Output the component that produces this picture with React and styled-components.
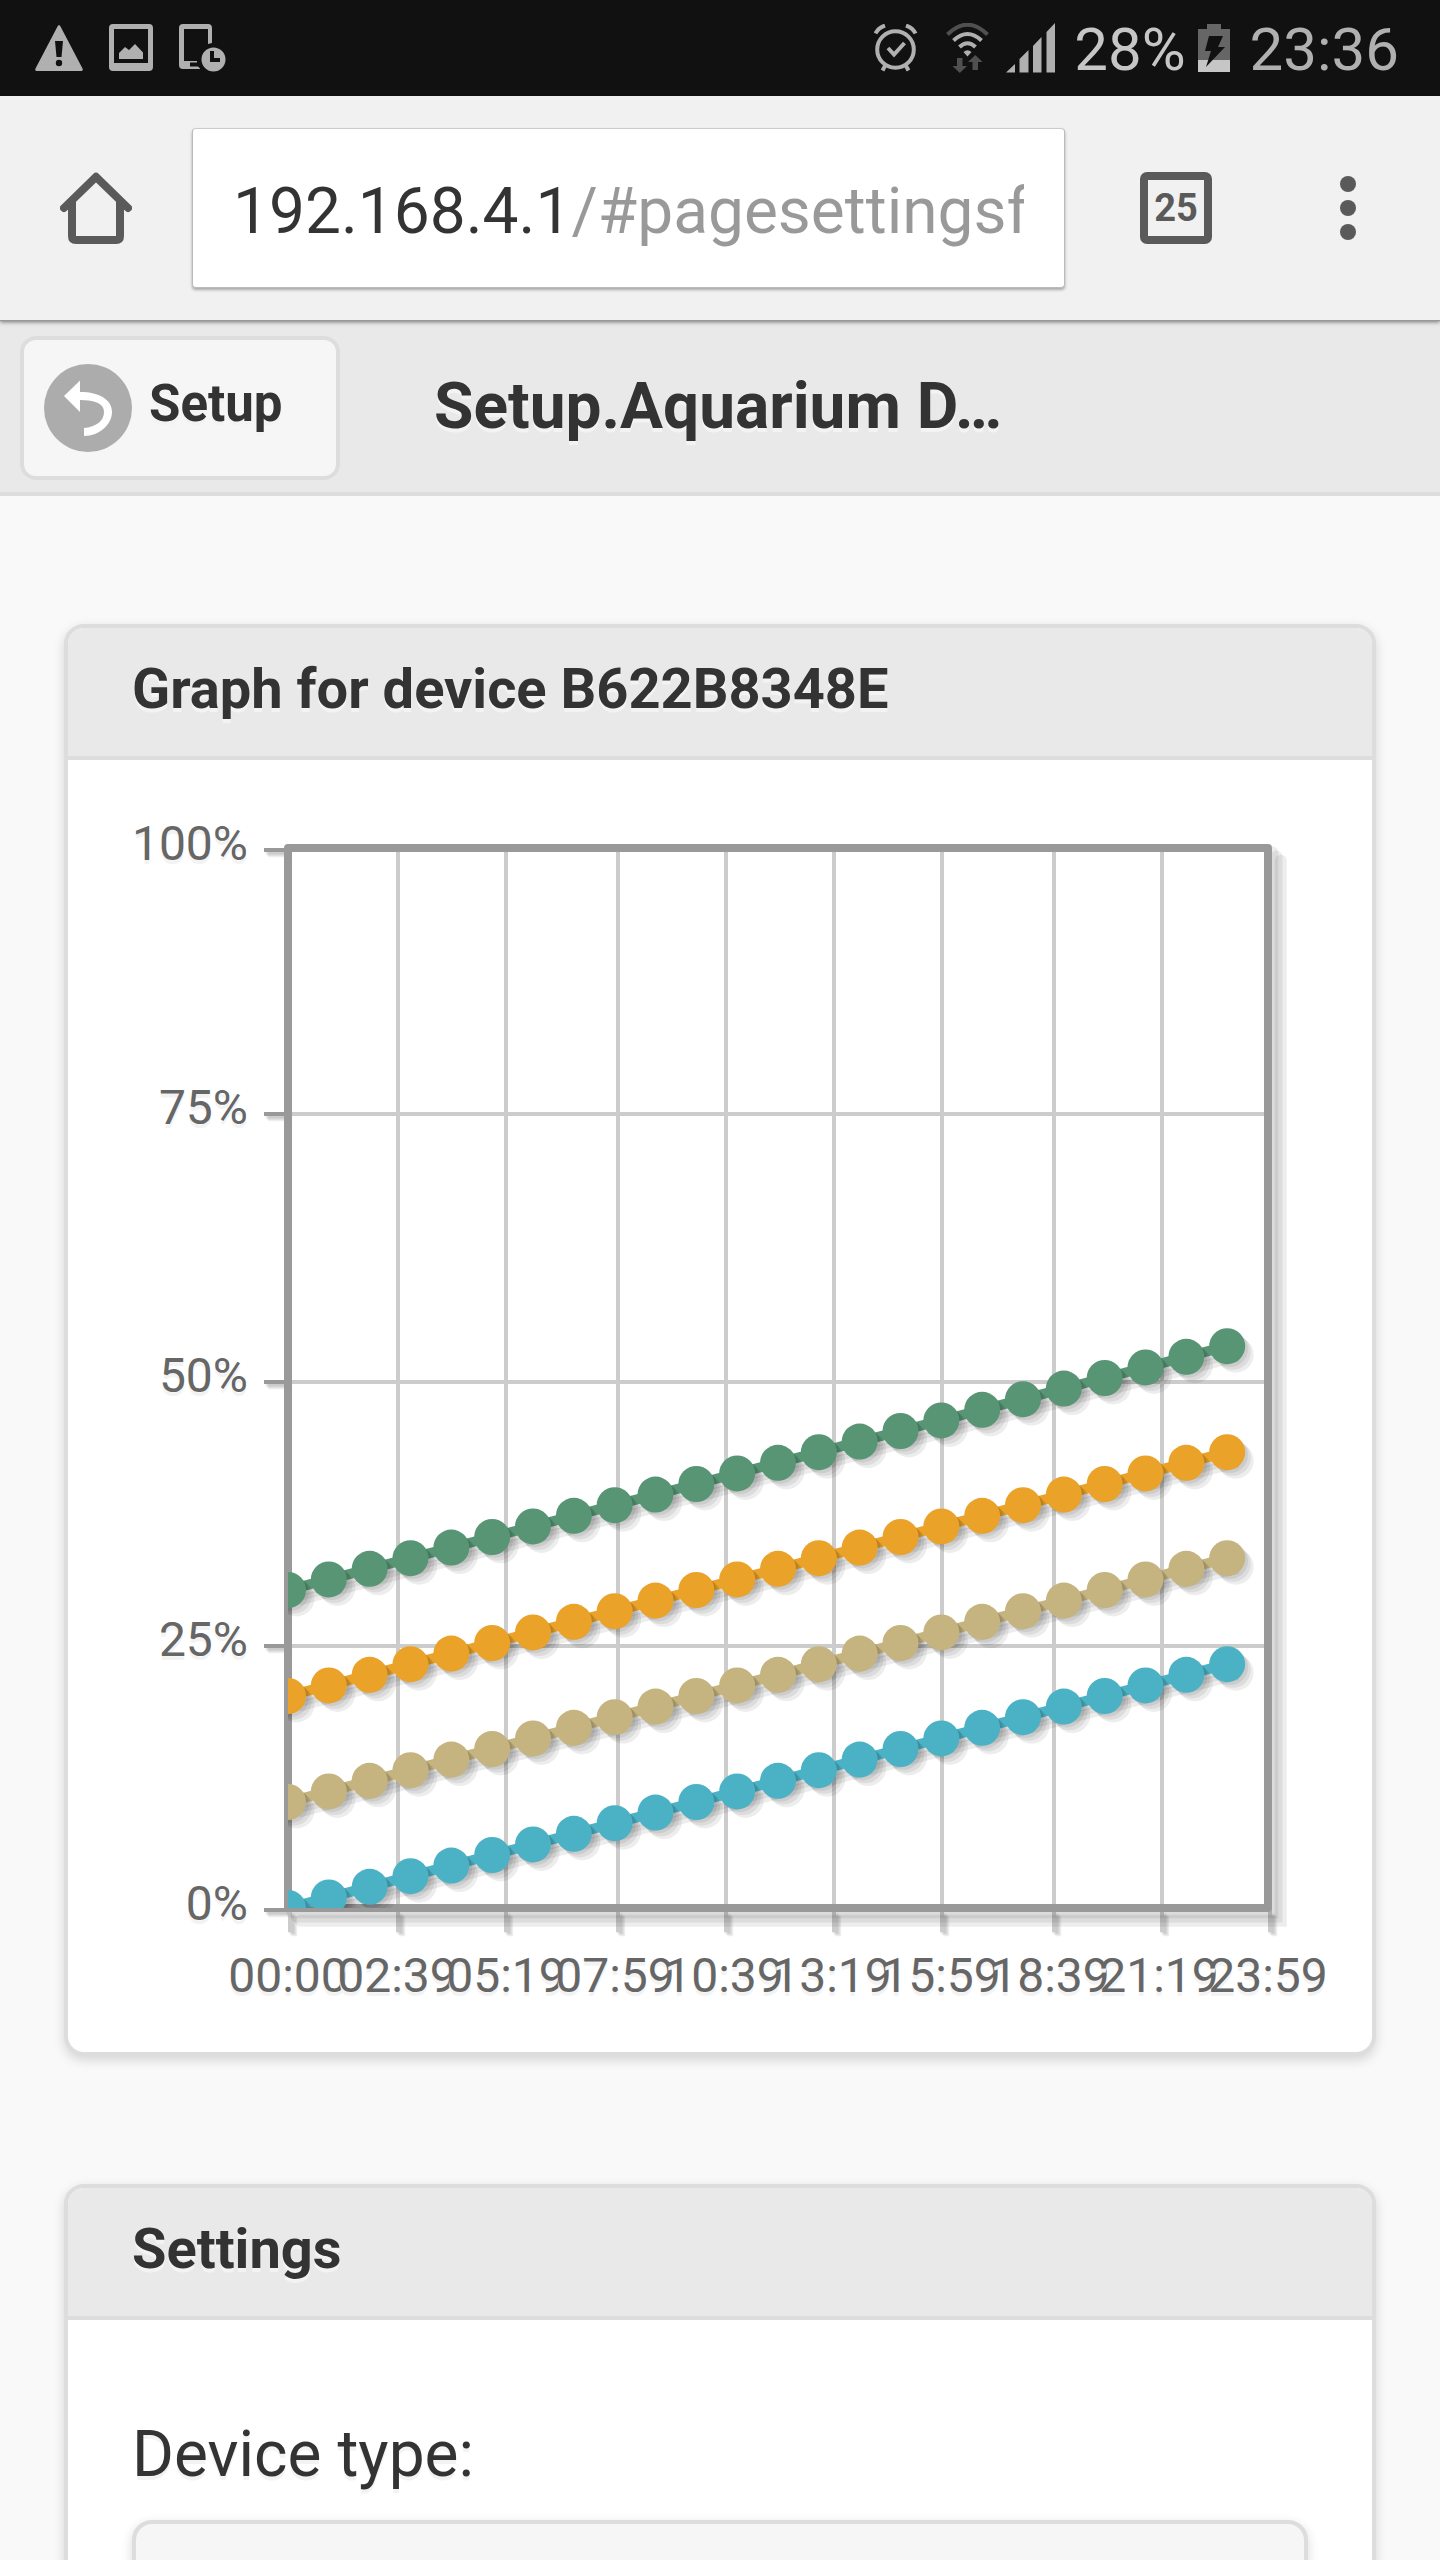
import React from "react";
import styled, { createGlobalStyle, css } from "styled-components";

const GlobalStyle = createGlobalStyle`
  *, *::before, *::after { box-sizing: border-box; }
  body {
    margin: 0;
    background: #f9f9f9;
    color: #333;
    font-family: Roboto, "Liberation Sans", sans-serif;
  }
`;

const embossed = css`
  text-shadow: 0 4px 0 #f3f3f3;
`;

const Screen = styled.div`
  display: flex;
  flex-direction: column;
  height: 100vh;
  overflow: hidden;
`;

/* ---------- status bar ---------- */

const StatusBar = styled.div`
  display: flex;
  flex: none;
  align-items: center;
  justify-content: space-between;
  height: 96px;
  padding: 0 41px 0 35px;
  background: #111;
  color: #b0b0b0;
`;

const StatusGroup = styled.div`
  display: flex;
  align-items: center;
  gap: ${(p) => p.$gap}px;
`;

const StatusText = styled.span`
  padding-top: 4px;
  color: ${(p) => (p.$bright ? "#c6c6c6" : "#b0b0b0")};
  font-size: 60px;
  line-height: 72px;
`;

const WarningIcon = () => (
  <svg width="48" height="48" viewBox="0 0 48 48" aria-hidden="true">
    <path
      fill="currentColor"
      fillRule="evenodd"
      d="M22.5 2.5Q24 -.5 25.500 2.500L47.500 44.500Q48.500 47 46 47H2Q-.5 47 .5 44.500ZM20 17L21.500 33H26.500L28 17ZM24 35.800A3.200 3.200 0 1 0 24 42.200A3.200 3.200 0 1 0 24 35.800Z"
    />
  </svg>
);

const ImageIcon = () => (
  <svg width="44" height="48" viewBox="0 0 44 48" aria-hidden="true">
    <path
      fill="currentColor"
      fillRule="evenodd"
      d="M4 0H40Q44 0 44 4V43Q44 47 40 47H4Q0 47 0 43V4Q0 0 4 0ZM5 5V39H39V5ZM10 35V29L16 23L20 26L26 20L34 28.500V35Z"
    />
  </svg>
);

const DeviceClockIcon = () => (
  <svg width="48" height="48" viewBox="0 0 48 48" aria-hidden="true">
    <path
      fill="currentColor"
      d="M4 0H29Q33 0 33 4V19L29 20V5H5V37H18V38.500H11V42.500H19L21 44.500V45H4Q0 45 0 41V4Q0 0 4 0Z"
    />
    <circle cx="34.500" cy="35.500" r="12" fill="currentColor" />
    <path d="M33 27V36H41" fill="none" stroke="#111" strokeWidth="4" />
  </svg>
);

const AlarmIcon = () => (
  <svg width="60" height="48" viewBox="0 0 60 48" aria-hidden="true">
    <g fill="none" stroke="currentColor">
      <circle cx="21.500" cy="25.500" r="18.300" strokeWidth="4" />
      <path d="M1.500 9.500Q4 4 11 1.500M41.500 9.500Q39 4 32 1.500" strokeWidth="4" />
      <path d="M11.500 41L8.500 46.500M31.500 41L34.500 46.500" strokeWidth="4" />
      <path d="M14 24L20 30.500L30.500 19" strokeWidth="4" />
    </g>
  </svg>
);

const WifiIcon = () => (
  <svg width="48" height="50" viewBox="0 0 48 50" aria-hidden="true">
    <g fill="none" stroke="currentColor" strokeWidth="4">
      <path d="M1.500 11.500Q21.500 -8 41.500 11.500" stroke="#505050" />
      <path d="M7.500 17.500Q21.500 4.500 35.500 17.500" />
      <path d="M13.500 24Q21.500 16.500 29.500 24" />
    </g>
    <path fill="currentColor" d="M17.500 29Q21.500 25.500 25.500 29L21.500 33.500Z" />
    <path
      fill="#505050"
      d="M11 35H16.500V43H21L13.800 50L6.500 43H11ZM26.500 47H32V39H36.500L29.300 32L22 39H26.500Z"
    />
  </svg>
);

const SignalIcon = () => (
  <svg width="56" height="50" viewBox="0 0 56 50" aria-hidden="true">
    <path
      fill="currentColor"
      d="M0 49.500L9 41V49.500ZM13.500 49.500V36L22.500 27V49.500ZM27 49.500V23L35.500 14V49.500ZM40.500 49.500V9L49 0V49.500Z"
    />
  </svg>
);

const BatteryIcon = () => (
  <svg width="40" height="48" viewBox="0 0 40 48" aria-hidden="true">
    <path fill="#666" d="M9 0H23V5H32V36H0V5H9Z" />
    <path fill="#c6c6c6" d="M0 36H32V48H0Z" />
    <path fill="#111" d="M11 12H25L20 23H27L8 43L13 27H7Z" />
  </svg>
);

/* ---------- browser toolbar ---------- */

const Toolbar = styled.div`
  position: relative;
  z-index: 1;
  display: flex;
  flex: none;
  align-items: center;
  height: 224px;
  padding: 0 20px 0 60px;
  background: #f1f1f1;
  color: #5a5a5a;
  box-shadow: 0 1px 0 #999, 0 2px 4px rgba(0, 0, 0, 0.5);
`;

const IconButton = styled.button`
  display: flex;
  align-items: center;
  justify-content: center;
  width: ${(p) => p.$width}px;
  height: 72px;
  padding: 0;
  border: 0;
  background: none;
  color: inherit;
`;

const AddressBox = styled.div`
  flex: 1;
  height: 160px;
  margin: 0 75px 0 60px;
  padding: 0 40px;
  border: 1px solid #bbb;
  border-top-color: #ccc;
  border-radius: 4px;
  background: #fff;
  box-shadow: 0 2px 3px rgba(0, 0, 0, 0.3);
`;

/* The host part of the address is dark, the path after it is grey. */
const AddressInput = styled.input`
  width: 100%;
  height: 100%;
  padding: 6px 0 0;
  border: 0;
  outline: 0;
  background: linear-gradient(to right, #333 338px, #999 338px);
  -webkit-background-clip: text;
  background-clip: text;
  color: transparent;
  font: 400 64px/80px Roboto, "Liberation Sans", sans-serif;
`;

const TabsButton = styled.button`
  width: 72px;
  height: 72px;
  margin-right: 64px;
  padding: 0;
  border: 8px solid #5a5a5a;
  border-radius: 7px;
  background: none;
  color: #5a5a5a;
  font: 700 38px/56px Roboto, "Liberation Sans", sans-serif;
`;

const HomeIcon = () => (
  <svg width="72" height="72" viewBox="0 0 72 72" aria-hidden="true">
    <g fill="none" stroke="currentColor" strokeWidth="8">
      <path d="M4 36L36 4.800L68 36" strokeLinecap="round" strokeLinejoin="round" />
      <path d="M12 30V64Q12 68 16 68H56Q60 68 60 64V30" />
    </g>
  </svg>
);

const MenuIcon = () => (
  <svg width="16" height="64" viewBox="0 0 16 64" fill="currentColor" aria-hidden="true">
    <circle cx="8" cy="8" r="8" />
    <circle cx="8" cy="32" r="8" />
    <circle cx="8" cy="56" r="8" />
  </svg>
);

/* ---------- page header ---------- */

const PageHeader = styled.header`
  display: grid;
  grid-template-columns: 30% 40% 30%;
  flex: none;
  align-items: center;
  height: 176px;
  border-bottom: 4px solid #ddd;
  background: #e9e9e9;
`;

const BackLink = styled.a`
  ${embossed}
  display: flex;
  align-items: center;
  gap: 17px;
  justify-self: start;
  width: 320px;
  height: 144px;
  margin: 4px 0 0 20px;
  padding-left: 20px;
  border: 4px solid #ddd;
  border-radius: 16px;
  background: #f6f6f6;
  color: #333;
  font-size: 51px;
  font-weight: 700;
  text-decoration: none;
`;

const BackLabel = styled.span`
  padding-bottom: 10px;
`;

const PageTitle = styled.h1`
  ${embossed}
  margin: 0;
  padding: 2px 0 0 2px;
  font-size: 64px;
  font-weight: 700;
  line-height: 84px;
  white-space: nowrap;
`;

const BackIcon = () => (
  <svg width="88" height="88" viewBox="0 0 88 88" aria-hidden="true">
    <circle cx="44" cy="44" r="44" fill="#acacac" />
    <path
      fill="#fff"
      d="M20 32L36 16.500V28C56 28 68 36 68 48C68 60 56 72 40 72V64C52 63 60 57 60 48C60 40 52 36 36 36V48Z"
    />
  </svg>
);

/* ---------- content ---------- */

const Content = styled.main`
  display: flex;
  flex-direction: column;
  gap: 128px;
  padding: 128px 64px 0;
`;

const Card = styled.section`
  border: 4px solid #ddd;
  border-radius: 20px;
  background: #fff;
  box-shadow: 0 4px 12px rgba(0, 0, 0, 0.15);
`;

const CardTitle = styled.h2`
  ${embossed}
  height: 132px;
  margin: 0;
  padding: 27px 64px 0;
  border-bottom: 4px solid #ddd;
  border-radius: 16px 16px 0 0;
  background: #e9e9e9;
  font-size: 56px;
  font-weight: 700;
  line-height: 68px;
`;

const Field = styled.div`
  display: flex;
  flex-direction: column;
  gap: 23px;
  padding: 93px 64px 64px;
`;

const FieldLabel = styled.label`
  ${embossed}
  font-size: 64px;
  line-height: 84px;
`;

const Select = styled.select`
  width: 100%;
  height: 168px;
  border: 4px solid #ddd;
  border-radius: 20px;
  background: #f6f6f6;
  box-shadow: 0 4px 12px rgba(0, 0, 0, 0.15);
  color: #333;
  font: 700 64px Roboto, "Liberation Sans", sans-serif;
  appearance: none;
`;

/* ---------- chart ---------- */

const ChartSvg = styled.svg`
  display: block;
  width: 100%;
  height: auto;
`;

const TickLabel = styled.text`
  ${embossed}
  fill: #666;
  font-size: 48px;
  text-anchor: ${(p) => p.$anchor};
`;

const PLOT = { left: 220, top: 88, width: 980, height: 1060 };
const RIGHT = PLOT.left + PLOT.width;
const BOTTOM = PLOT.top + PLOT.height;
const LAYERS = [1, 2, 3];

const Y_TICKS = [
  { label: "100%", y: 90 },
  { label: "75%", y: 354 },
  { label: "50%", y: 622 },
  { label: "25%", y: 886 },
  { label: "0%", y: 1150 },
];

const X_TICKS = [
  { label: "00:00", x: 222 },
  { label: "02:39", x: 330 },
  { label: "05:19", x: 438 },
  { label: "07:59", x: 550 },
  { label: "10:39", x: 658 },
  { label: "13:19", x: 766 },
  { label: "15:59", x: 874 },
  { label: "18:39", x: 986 },
  { label: "21:19", x: 1094 },
  { label: "23:59", x: 1202 },
];

const SERIES = [
  { color: "#4bb2c5", base: 0 },
  { color: "#eaa228", base: 20 },
  { color: "#c5b47f", base: 10 },
  { color: "#579575", base: 30 },
];

const HOURS = Array.from({ length: 24 }, (_, hour) => hour);

function Series({ color, base }) {
  const points = HOURS.map((hour) => [
    PLOT.left + (PLOT.width * hour) / 24,
    BOTTOM - (PLOT.height * (base + hour)) / 100,
  ]);
  const line = points.map((p) => p.join(",")).join(" ");
  return (
    <g>
      {LAYERS.map((k) => (
        <polyline
          key={k}
          points={line}
          transform={`translate(${3.54 * k} ${3.54 * k})`}
          fill="none"
          stroke="#000"
          strokeOpacity="0.07"
          strokeWidth="10"
        />
      ))}
      <polyline points={line} fill="none" stroke={color} strokeWidth="10" />
      {points.map(([x, y], i) => (
        <g key={i}>
          {LAYERS.map((k) => (
            <circle
              key={k}
              cx={x + 2.83 * k}
              cy={y + 2.83 * k}
              r="18"
              fill="#000"
              fillOpacity="0.07"
            />
          ))}
          <circle cx={x} cy={y} r="18" fill={color} />
        </g>
      ))}
    </g>
  );
}

function Chart() {
  return (
    <ChartSvg viewBox="0 0 1304 1292" role="img" aria-label="Graph for device B622B8348E">
      <defs>
        <clipPath id="plot-area">
          <rect x={PLOT.left} y={PLOT.top} width={PLOT.width} height={PLOT.height} />
        </clipPath>
      </defs>

      <g stroke="#000" strokeOpacity="0.07" strokeWidth="6">
        {LAYERS.map((k) => (
          <g key={k} transform={`translate(${1.41 * k} ${1.41 * k})`}>
            {X_TICKS.map(({ x }) => (
              <line key={x} x1={x} x2={x} y1={BOTTOM + 4} y2={BOTTOM + 24} />
            ))}
            {Y_TICKS.map(({ y }) => (
              <line key={y} x1={PLOT.left - 24} x2={PLOT.left} y1={y} y2={y} />
            ))}
          </g>
        ))}
      </g>

      <g stroke="#ccc" strokeWidth="4">
        {X_TICKS.map(({ x }) => (
          <line key={x} x1={x} x2={x} y1={PLOT.top} y2={BOTTOM + 24} />
        ))}
        {Y_TICKS.map(({ y }) => (
          <line key={y} x1={PLOT.left} x2={RIGHT} y1={y} y2={y} />
        ))}
      </g>
      <g stroke="#999" strokeWidth="4">
        {Y_TICKS.map(({ y }) => (
          <line key={y} x1={PLOT.left - 24} x2={PLOT.left} y1={y} y2={y} />
        ))}
      </g>

      <g fill="none" stroke="#000" strokeOpacity="0.07">
        {LAYERS.map((k) => (
          <path
            key={k}
            d={`M${RIGHT} ${PLOT.top}V${BOTTOM}H${PLOT.left}`}
            transform={`translate(${4.24 * k} ${4.24 * k})`}
            strokeWidth="12"
            strokeLinecap="round"
          />
        ))}
      </g>

      <rect
        x={PLOT.left}
        y={PLOT.top}
        width={PLOT.width}
        height={PLOT.height}
        fill="none"
        stroke="#999"
        strokeWidth="8"
        strokeLinejoin="round"
      />

      <g clipPath="url(#plot-area)">
        {SERIES.map((series) => (
          <Series key={series.color} {...series} />
        ))}
      </g>

      {Y_TICKS.map(({ label, y }) => (
        <TickLabel key={label} x="180" y={y + 10} $anchor="end">
          {label}
        </TickLabel>
      ))}
      {X_TICKS.map(({ label }, i) => (
        <TickLabel
          key={label}
          x={PLOT.left + Math.round((PLOT.width * i) / 9)}
          y={BOTTOM + 84}
          $anchor="middle"
        >
          {label}
        </TickLabel>
      ))}
    </ChartSvg>
  );
}

export default function App() {
  return (
    <>
      <GlobalStyle />
      <Screen>
        <StatusBar>
          <StatusGroup $gap={26}>
            <WarningIcon />
            <ImageIcon />
            <DeviceClockIcon />
          </StatusGroup>
          <StatusGroup $gap={12}>
            <AlarmIcon />
            <WifiIcon />
            <SignalIcon />
            <StatusText $bright>28%</StatusText>
            <BatteryIcon />
            <StatusText>23:36</StatusText>
          </StatusGroup>
        </StatusBar>

        <Toolbar>
          <IconButton $width={72} type="button" aria-label="Home">
            <HomeIcon />
          </IconButton>
          <AddressBox>
            <AddressInput
              type="text"
              aria-label="Address"
              defaultValue="192.168.4.1/#pagesettingsf"
            />
          </AddressBox>
          <TabsButton type="button">25</TabsButton>
          <IconButton $width={144} type="button" aria-label="Menu">
            <MenuIcon />
          </IconButton>
        </Toolbar>

        <PageHeader>
          <BackLink href="#setup">
            <BackIcon />
            <BackLabel>Setup</BackLabel>
          </BackLink>
          <PageTitle>Setup.Aquarium D…</PageTitle>
        </PageHeader>

        <Content>
          <Card>
            <CardTitle>Graph for device B622B8348E</CardTitle>
            <Chart />
          </Card>
          <Card>
            <CardTitle>Settings</CardTitle>
            <Field>
              <FieldLabel htmlFor="device-type">Device type:</FieldLabel>
              <Select id="device-type" />
            </Field>
          </Card>
        </Content>
      </Screen>
    </>
  );
}
